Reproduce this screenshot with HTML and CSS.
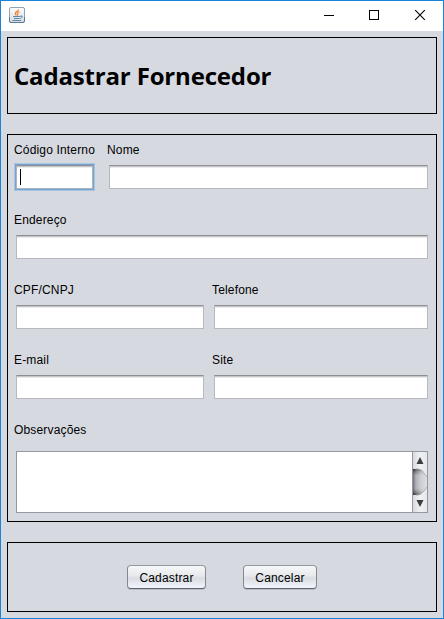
FILE: index.html
```html
<!DOCTYPE html>
<html lang="pt-BR">
<head>
<meta charset="utf-8">
<title>Cadastrar Fornecedor</title>
<link rel="stylesheet" href="styles.css">
</head>
<body>
<div class="window">
  <header class="titlebar">
    <svg class="app-icon" width="16" height="16" viewBox="0 0 16 16">
      <defs><linearGradient id="tile" x1="0" y1="0" x2="0" y2="1"><stop offset="0" stop-color="#fdfdfd"/><stop offset="1" stop-color="#d3dbe2"/></linearGradient></defs>
      <rect x=".5" y=".5" width="15" height="15" rx="1.5" fill="url(#tile)" stroke="#8ea3b4"/>
      <path d="M.5 10v4q0 1.500 1.500 1.500h12q1.500 0 1.500-1.500v-4" fill="none" stroke="#5a7d97"/>
      <path d="M9.500 2.500C9.500 4.500 6 4.800 6.300 6.600Q6.500 7.700 7.500 8.500M10.500 4.800Q7.500 6 8.700 7.200Q9 8 8.200 8.600" fill="none" stroke="#ee8130" stroke-width="1.200"/>
      <path d="M4 9.500h7.500M5 11.500h5.500M3.500 13.500h8.500M11.500 9Q14 8.500 13 10.200Q12.500 11 11.300 11.500" fill="none" stroke="#5d87a6"/>
    </svg>
    <div class="controls">
      <svg width="46" height="30" viewBox="0 0 46 30"><path d="M17 14.500h10" stroke="#000"/></svg>
      <svg width="46" height="30" viewBox="0 0 46 30"><rect x="16.500" y="9.500" width="9" height="9" fill="none" stroke="#000"/></svg>
      <svg width="46" height="30" viewBox="0 0 46 30"><path d="M16.200 9.200l9.600 9.600M25.800 9.200l-9.600 9.600" stroke="#000" stroke-width="1.100"/></svg>
    </div>
  </header>
  <main class="content">
    <section class="panel heading"><h1>Cadastrar Fornecedor</h1></section>
    <section class="panel form">
      <div class="row row-code">
        <div class="cell"><label>Código Interno</label><div class="field focused"><span class="caret"></span></div></div>
        <div class="cell"><label>Nome</label><div class="field"></div></div>
      </div>
      <div class="row">
        <div class="cell"><label>Endereço</label><div class="field"></div></div>
      </div>
      <div class="row row-half">
        <div class="cell"><label>CPF/CNPJ</label><div class="field"></div></div>
        <div class="cell"><label>Telefone</label><div class="field"></div></div>
      </div>
      <div class="row row-half">
        <div class="cell"><label>E-mail</label><div class="field"></div></div>
        <div class="cell"><label>Site</label><div class="field"></div></div>
      </div>
      <div class="cell notes">
        <label>Observações</label>
        <div class="textarea">
          <div class="text"></div>
          <svg class="scrollbar" width="14" height="60" viewBox="0 0 14 60">
            <defs>
              <linearGradient id="track"><stop offset="0" stop-color="#d8dadd"/><stop offset=".5" stop-color="#f1f2f3"/><stop offset="1" stop-color="#e4e6e9"/></linearGradient>
              <linearGradient id="thumb"><stop offset="0" stop-color="#707276"/><stop offset=".2" stop-color="#adafb4"/><stop offset=".55" stop-color="#cccdd2"/><stop offset="1" stop-color="#dedfe3"/></linearGradient>
              <linearGradient id="shade" x1="0" y1="0" x2="0" y2="1"><stop offset="0" stop-color="#222" stop-opacity=".85"/><stop offset=".25" stop-color="#555" stop-opacity="0"/><stop offset=".75" stop-color="#555" stop-opacity="0"/><stop offset="1" stop-color="#222" stop-opacity=".85"/></linearGradient>
              <linearGradient id="fade"><stop offset="0" stop-color="#fff"/><stop offset="1" stop-color="#fff" stop-opacity="0"/></linearGradient>
              <mask id="left"><rect width="12" height="60" fill="url(#fade)"/></mask>
            </defs>
            <rect width="14" height="60" fill="url(#track)"/>
            <path d="M0 17H5Q9 17 11 21Q12 23 14 25V35Q12 38 11 39Q8 43 5 43H0Z" fill="url(#thumb)"/>
            <path d="M0 17H5Q9 17 11 21V39Q8 43 5 43H0Z" fill="url(#shade)" mask="url(#left)"/>
            <path d="M3 17H5Q9 17 11 21Q12 23 14 25M14 35Q12 38 11 39Q8 43 5 43H3" fill="none" stroke="#a0a3a8" stroke-width=".8"/>
            <path d="M7 5L10.500 12H3.500ZM3.500 48H10.500L7 55Z" fill="#3b3d40"/>
          </svg>
        </div>
      </div>
    </section>
    <section class="panel actions">
      <button class="btn btn-save">Cadastrar</button>
      <button class="btn btn-cancel">Cancelar</button>
    </section>
  </main>
</div>
</body>
</html>
```

FILE: styles.css
```css
* { box-sizing: border-box; }
body { margin: 0; font: 12px/16px "Liberation Sans", Arial, sans-serif; color: #000; }
.window { width: 444px; height: 619px; border: 1px solid #1883d7; background: #d6d9e0; }
.titlebar { display: flex; justify-content: space-between; height: 30px; overflow: hidden; background: #fff; }
.app-icon { margin: 6px 0 0 8px; }
.controls { display: flex; width: 136px; }
.controls svg { display: block; flex: none; }
.content { display: flex; flex-direction: column; gap: 20px; padding: 6px; }
.panel { width: 430px; border: 1px solid #000; }
.heading { height: 77px; padding: 23px 6px 0; }
h1 { margin: 0; font: bold 24px/30px "Open Sans", "Noto Sans", sans-serif; letter-spacing: -0.17px; white-space: nowrap; }
.form { height: 388px; padding: 7px 8px 0; }
.row { display: grid; grid-template-columns: 412px; height: 70px; }
.row-code { grid-template-columns: 77px 319px; column-gap: 16px; }
.row-half { grid-template-columns: 188px 214px; column-gap: 10px; }
.cell label { display: block; height: 16px; margin: 0 0 7px -2px; letter-spacing: 0.16px; white-space: nowrap; }
.field { height: 24px; border: 1px solid #b7b9be; border-top-color: #8d8f94; background: linear-gradient(#c5c6c9 0 1px, #ebebec 1px 2px, #fff 2px); }
.focused { border-color: #8d8f94 #a9b6c5 #a9b6c5; box-shadow: 0 0 0 1px #73a4d1, 0 0 0 2px #abc5de; padding: 3px 0 0 3px; }
.caret { display: block; width: 1px; height: 16px; background: #000; }
.notes label { margin-bottom: 13px; }
.textarea { display: flex; width: 412px; height: 62px; border: 1px solid #9297a1; }
.text { flex: 1; background: #fff; border-right: 1px solid #9297a1; }
.scrollbar { display: block; }
.actions { display: flex; gap: 37px; height: 70px; padding: 22px 0 0 119px; }
.btn { height: 24px; padding: 1px 0 0; border: 1px solid #85888d; border-color: #96999e #85888d #5f6268; border-radius: 4px; background: linear-gradient(#f7f8f9, #e6e8eb 45%, #d9dce2 55%, #f2f5fb); box-shadow: 0 1px 0 #b9bcc3; font: inherit; letter-spacing: 0.16px; color: #000; }
.btn-save { width: 79px; }
.btn-cancel { width: 74px; }
```
